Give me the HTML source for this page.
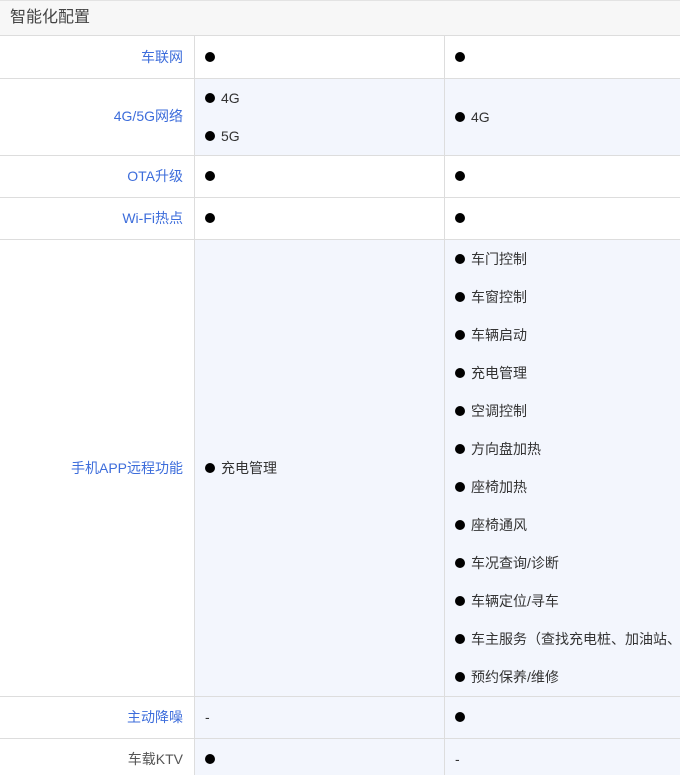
<!DOCTYPE html><html><head><meta charset="utf-8"><style>
body{margin:0;width:680px;height:775px;overflow:hidden;background:#fff;font-family:"Liberation Sans","Noto Sans CJK SC",sans-serif;font-size:14px;color:#333;position:relative}
.a{position:absolute}
.h{left:0;top:0;width:680px;height:36px;background:#f7f7f7;border-top:1px solid #e3e3e3;border-bottom:1px solid #ddd;box-sizing:border-box;font-size:16px;line-height:34px;padding-left:10px;color:#444}
.hl{position:absolute;left:0;width:680px;height:1px;background:#ddd}
.vl{position:absolute;top:36px;width:1px;height:739px;background:#ddd}
.bg{position:absolute;background:#f3f6fd}
.l{position:absolute;right:497px;color:#3d6ddb;line-height:20px;white-space:nowrap}
.t{position:absolute;line-height:20px;white-space:nowrap;padding-left:16px}
.t.b:before{content:"";position:absolute;left:0;top:5px;width:10px;height:10px;border-radius:50%;background:#000}
</style></head><body>
<div class="a h">智能化配置</div>
<div class="bg" style="left:195px;top:79px;width:485px;height:76px"></div>
<div class="bg" style="left:195px;top:240px;width:485px;height:456px"></div>
<div class="bg" style="left:195px;top:697px;width:485px;height:78px"></div>
<div class="hl" style="top:78px"></div><div class="hl" style="top:155px"></div><div class="hl" style="top:197px"></div><div class="hl" style="top:239px"></div><div class="hl" style="top:696px"></div><div class="hl" style="top:738px"></div>
<div class="vl" style="left:194px"></div><div class="vl" style="left:444px"></div>
<div class="l" style="top:47px">车联网</div>
<div class="l" style="top:106px">4G/5G网络</div>
<div class="l" style="top:166px">OTA升级</div>
<div class="l" style="top:208px">Wi-Fi热点</div>
<div class="l" style="top:458px">手机APP远程功能</div>
<div class="l" style="top:707px">主动降噪</div>
<div class="l" style="top:749px;color:#555">车载KTV</div>
<div class="t b" style="left:205px;top:47px"></div><div class="t b" style="left:455px;top:47px"></div>
<div class="t b" style="left:205px;top:88px">4G</div><div class="t b" style="left:205px;top:126px">5G</div><div class="t b" style="left:455px;top:107px">4G</div>
<div class="t b" style="left:205px;top:166px"></div><div class="t b" style="left:455px;top:166px"></div>
<div class="t b" style="left:205px;top:208px"></div><div class="t b" style="left:455px;top:208px"></div>
<div class="t b" style="left:205px;top:458px">充电管理</div>
<div class="t b" style="left:455px;top:249px">车门控制</div>
<div class="t b" style="left:455px;top:287px">车窗控制</div>
<div class="t b" style="left:455px;top:325px">车辆启动</div>
<div class="t b" style="left:455px;top:363px">充电管理</div>
<div class="t b" style="left:455px;top:401px">空调控制</div>
<div class="t b" style="left:455px;top:439px">方向盘加热</div>
<div class="t b" style="left:455px;top:477px">座椅加热</div>
<div class="t b" style="left:455px;top:515px">座椅通风</div>
<div class="t b" style="left:455px;top:553px">车况查询/诊断</div>
<div class="t b" style="left:455px;top:591px">车辆定位/寻车</div>
<div class="t b" style="left:455px;top:629px">车主服务（查找充电桩、加油站、</div>
<div class="t b" style="left:455px;top:667px">预约保养/维修</div>
<div class="t" style="left:205px;top:707px;padding:0">-</div><div class="t b" style="left:455px;top:707px"></div>
<div class="t b" style="left:205px;top:749px"></div><div class="t" style="left:455px;top:749px;padding:0">-</div>
</body></html>
